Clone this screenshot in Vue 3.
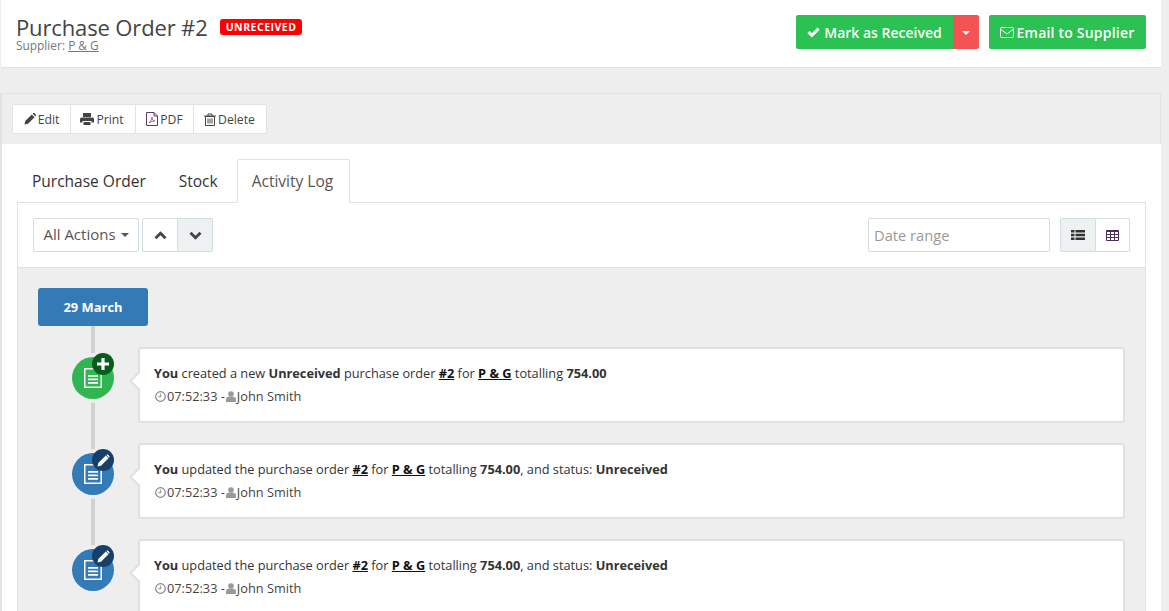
<script setup>
const rows = [
  { kind: 'add', parts: [['b','You'],['t',' created a new '],['b','Unreceived'],['t',' purchase order '],['l','#2'],['t',' for '],['l','P & G'],['t',' totalling '],['b','754.00']] },
  { kind: 'edit', parts: [['b','You'],['t',' updated the purchase order '],['l','#2'],['t',' for '],['l','P & G'],['t',' totalling '],['b','754.00'],['t',', and status: '],['b','Unreceived']] },
  { kind: 'edit', parts: [['b','You'],['t',' updated the purchase order '],['l','#2'],['t',' for '],['l','P & G'],['t',' totalling '],['b','754.00'],['t',', and status: '],['b','Unreceived']] }
]
</script>

<template>
  <div class="page">
    <header class="head">
      <div class="title-block">
        <div class="title-row">
          <h1>Purchase Order #2</h1>
          <span class="badge">UNRECEIVED</span>
        </div>
        <div class="supplier">Supplier: <a>P &amp; G</a></div>
      </div>
      <div class="head-actions">
        <div class="split">
          <button class="btn-green main">
            <svg width="13" height="11" viewBox="0 0 13 11"><path d="M1.400 5.200 4.800 8.400 11.600 1.600" fill="none" stroke="#fff" stroke-width="3"/></svg>
            Mark as Received
          </button>
          <button class="btn-red"><span class="caret white"></span></button>
        </div>
        <button class="btn-green mail">
          <svg width="14" height="11" viewBox="0 0 14 11"><rect x=".5" y=".5" width="13" height="10" rx="1" fill="none" stroke="#fff"/><path d="M1 2.500 7 7l6-4.500" fill="none" stroke="#fff"/></svg><span>Email to Supplier</span>
        </button>
      </div>
    </header>

    <section class="work">
      <div class="toolbar">
        <button class="tool t-edit">
          <svg width="12" height="12" viewBox="0 0 12 12"><path d="M0.500 11.500 1.200 8 7.800 1.400 10.600 4.200 4 10.800ZM8.600.600 9.200 0a.9.900 0 0 1 1.200 0l1.400 1.400a.9.900 0 0 1 0 1.200L11.300 3.400Z" fill="#444"/></svg>Edit
        </button>
        <button class="tool t-print">
          <svg width="14" height="12" viewBox="0 0 14 12"><path d="M3 0h8v4H3zM1.500 4.500h11A1.500 1.500 0 0 1 14 6v3.500h-2.500V8h-9v1.500H0V6a1.500 1.500 0 0 1 1.500-1.500ZM3.500 9h7v3h-7z" fill="#444"/></svg>Print
        </button>
        <button class="tool t-pdf">
          <svg width="12" height="14" viewBox="0 0 12 14"><path d="M.5.500h7.500l3.500 3.500v9.500H.5Z M8 .5V4h3.500" fill="none" stroke="#5b3a6b"/><path d="M3 11c1.500-1 3-4 3-6 0 3 1.500 3.500 3 4-2 0-4 .5-6 2Z" fill="none" stroke="#a25" stroke-width=".7"/></svg>PDF
        </button>
        <button class="tool t-del">
          <svg width="12" height="13" viewBox="0 0 12 13"><path d="M1.500 3.500h9v9h-9ZM0 3h12M4 3V1h4v2M4 5.500v5M6 5.500v5M8 5.500v5" fill="none" stroke="#444"/></svg>Delete
        </button>
      </div>

      <div class="panel">
        <nav class="tabs">
          <a class="tab">Purchase Order</a>
          <a class="tab">Stock</a>
          <a class="tab active">Activity Log</a>
        </nav>
        <div class="tab-body">
          <div class="filters">
            <div class="f-left">
              <button class="fbtn actions">All Actions <span class="caret"></span></button>
              <div class="group">
                <button class="fbtn arrow">
                  <svg width="13" height="9" viewBox="0 0 13 9"><path d="M1.500 7.300 6.500 2.300l5 5" fill="none" stroke="#444" stroke-width="2.800"/></svg>
                </button>
                <button class="fbtn arrow on">
                  <svg width="13" height="9" viewBox="0 0 13 9"><path d="M1.500 1.700 6.500 6.700l5-5" fill="none" stroke="#444" stroke-width="2.800"/></svg>
                </button>
              </div>
            </div>
            <div class="f-right">
              <input class="date" placeholder="Date range" />
              <div class="group">
                <button class="fbtn view on">
                  <svg width="14" height="12" viewBox="0 0 14 12"><path d="M0 1h3.500v2.600H0zM4.500 1H14v2.600H4.500zM0 4.700h3.500v2.600H0zM4.500 4.700H14v2.600H4.500zM0 8.400h3.500V11H0zM4.500 8.400H14V11H4.500z" fill="#333"/></svg>
                </button>
                <button class="fbtn view">
                  <svg width="13" height="11" viewBox="0 0 13 11"><path d="M.5.500h12v10H.5ZM.5 1.500h12M.5 4.500h12M.5 7.500h12M4.500 1.500v9M8.500 1.500v9" fill="none" stroke="#4b2f55"/></svg>
                </button>
              </div>
            </div>
          </div>

          <div class="timeline">
            <div class="date-tag">29 March</div>
            <div v-for="(r, i) in rows" :key="i" class="entry">
              <div class="node" :class="r.kind">
                <svg class="doc" width="18" height="20" viewBox="0 0 18 20"><path d="M.750.750h12l4.500 4.500v14H.750Z" fill="none" stroke="#fff" stroke-width="1.500"/><path d="M4 7h10v1.700H4zM4 10.500h10v1.700H4zM4 14h10v1.700H4z" fill="#fff"/></svg>
                <span class="mini">
                  <svg v-if="r.kind === 'add'" width="12" height="12" viewBox="0 0 12 12"><path d="M4.400 0h3.200v4.400H12v3.200H7.600V12H4.400V7.600H0V4.400h4.400Z" fill="#fff"/></svg>
                  <svg v-else width="13" height="13" viewBox="0 0 13 13"><path d="M.5 12.500 1.300 9 8.800 1.500 11.500 4.200 4 11.700Z" fill="#fff"/><path d="M9.700.7a1 1 0 0 1 1.400 0l1.200 1.200a1 1 0 0 1 0 1.400l-.4.400-2.600-2.600Z" fill="#fff"/></svg>
                </span>
              </div>
              <div class="card">
                <p class="msg">
                  <template v-for="(p, j) in r.parts" :key="j"><b v-if="p[0] === 'b'">{{ p[1] }}</b><a v-else-if="p[0] === 'l'">{{ p[1] }}</a><template v-else>{{ p[1] }}</template></template>
                </p>
                <p class="meta">
                  <svg class="clock" width="11" height="11" viewBox="0 0 11 11"><circle cx="5.500" cy="5.500" r="4.800" fill="none" stroke="#888" stroke-width="1.200"/><path d="M5.700 2.600v3.200H3.300" fill="none" stroke="#888"/></svg><span>07:52:33 -</span><svg class="user" width="10" height="11" viewBox="0 0 10 11"><circle cx="5" cy="3" r="2.800" fill="#999"/><path d="M0 11V8.200C0 6.800 1.200 6 3 5.600h4C8.800 6 10 6.800 10 8.200V11Z" fill="#999"/></svg><span>John Smith</span>
                </p>
              </div>
            </div>
          </div>
        </div>
      </div>
    </section>
  </div>
</template>

<style>
html, body { margin: 0; background: #fff; overflow: hidden; }
</style>

<style scoped>
.page {
  width: 1169px; height: 611px; overflow: hidden; background: #eee;
  font-family: "Open Sans", sans-serif; color: #333; box-sizing: border-box;
}
button { font-family: inherit; cursor: pointer; }
.head {
  height: 68px; box-sizing: border-box; margin: 0 8px 0 1px; background: #fff;
  border-bottom: 1px solid #e3e3e3; display: flex; justify-content: space-between;
  padding: 15px 15px 0 15px;
}
.title-row { display: flex; align-items: center; gap: 12px; height: 24px; }
h1 { margin: 0; font-size: 22px; font-weight: 400; color: #444; line-height: 24px; letter-spacing: -.135px; }
.badge {
  background: #f00; color: #fff; font-size: 10.500px; font-weight: 700; line-height: 17px;
  height: 16px; padding: 0 6px; border-radius: 3px; letter-spacing: .5px; margin-top: -1px;
}
.supplier { font-size: 11.900px; line-height: 12px; color: #777; }
.supplier a { text-decoration: underline; }
.head-actions { display: flex; gap: 10px; }
.split { display: flex; }
.btn-green, .btn-red {
  height: 34px; border: 0; color: #fff; font-size: 14px; font-weight: 600;
  display: flex; align-items: center; padding: 0;
}
.btn-green { background: #2bc253; border-radius: 2px; white-space: nowrap; }
.main { width: 157px; justify-content: center; gap: 4px; border-radius: 2px 0 0 2px; }
.mail { width: 157px; justify-content: center; gap: 3px; padding-right: 1px; }
.mail span { letter-spacing: .2px; }
.btn-red { width: 26px; background: #f45353; justify-content: center; border-radius: 0 2px 2px 0; }
.caret {
  display: inline-block; width: 0; height: 0; vertical-align: middle; margin-left: 1px;
  border-top: 4px solid #555; border-left: 4px solid transparent; border-right: 4px solid transparent;
}
.caret.white { border-top-color: #fff; margin: 2px 0 0; }
.work { margin-top: 25px; margin-right: 8px; border-top: 1px solid #e3e3e3; border-left: 2px solid #e3e3e3; border-right: 1px solid #e3e3e3; padding-top: 10px; }
.toolbar { display: flex; margin-left: 10px; height: 30px; box-sizing: border-box; width: fit-content; background: #fff; border: 1px solid #dfe3e6; border-radius: 2px; }
.tool {
  background: #fff; border: 0; border-right: 1px solid #dfe3e6; padding: 0; height: 28px; box-sizing: border-box;
  font-size: 12.200px; color: #444; display: flex; align-items: center; justify-content: center; gap: 2px; font-weight: 400;
}
.t-edit { width: 58px; }
.t-print { width: 65px; padding-right: 2px; }
.t-pdf { width: 58px; }
.t-del { width: 72px; border-right: 0; padding-right: 1px; }
.panel { background: #fff; margin-top: 10px; margin-right: -1px; padding: 15px 15px 0 15px; height: 480px; box-sizing: border-box; }
.tabs { display: flex; height: 44px; box-sizing: border-box; position: relative; }
.tab { height: 44px; line-height: 42px; font-size: 15.500px; color: #333; box-sizing: border-box; border: 1px solid transparent; white-space: nowrap; }
.tab:nth-child(1) { padding: 0 16px 0 14px; }
.tab:nth-child(2) { padding: 0 18px 0 15px; }
.tab.active { padding: 0 16px 0 14px; color: #555; background: #fff; border-color: #dfe3e6 #dfe3e6 #fff; border-radius: 2px 2px 0 0; position: relative; z-index: 1; }
.tab-body { border: 1px solid #dfe3e6; margin-top: -1px; }
.filters { height: 65px; box-sizing: border-box; padding: 15px 15px 0 15px; display: flex; justify-content: space-between; background: #fff; border-bottom: 1px solid #dfe3e6; }
.f-left, .f-right { display: flex; gap: 3px; height: 34px; }
.f-right { gap: 10px; }
.group { display: flex; }
.fbtn { background: #fff; border: 1px solid #d3dce0; height: 34px; box-sizing: border-box; padding: 0; display: flex; align-items: center; justify-content: center; color: #555; }
.actions { width: 106px; font-size: 15px; border-radius: 2px; gap: 4px; padding: 0 0 2px 0; }
.actions .caret { margin-top: 2px; }
.arrow { width: 36px; border-radius: 2px 0 0 2px; }
.arrow + .arrow { border-left: 0; width: 35px; border-radius: 0 2px 2px 0; }
.view { width: 36px; border-radius: 2px 0 0 2px; }
.view + .view { border-left: 0; width: 34px; border-radius: 0 2px 2px 0; }
.on { background: #edf1f2; }
.date { width: 182px; height: 34px; box-sizing: border-box; border: 1px solid #d3dce0; border-radius: 2px; padding: 0 5px; font: 14.700px "Open Sans", sans-serif; outline: 0; }
.date::placeholder { color: #999; opacity: 1; }
.timeline { background: #eee; padding: 20px 20px 0 20px; height: 400px; position: relative; }
.timeline::before { content: ""; position: absolute; left: 73px; top: 40px; height: 262px; width: 4px; background: #d2d0d0; }
.date-tag { position: relative; width: 110px; height: 38px; background: #337ab7; color: #fff; font-size: 12.900px; font-weight: 700; text-align: center; line-height: 38px; border-radius: 3px; margin-bottom: 21px; }
.entry { display: flex; position: relative; height: 76px; margin-bottom: 20px; padding-left: 34px; }
.node { position: relative; width: 42px; height: 42px; border-radius: 50%; margin-top: 10px; display: flex; align-items: center; justify-content: center; box-shadow: 0 0 0 4px #eee; flex: none; }
.node.add { background: #2fb551; }
.node.edit { background: #337ab7; }
.mini { position: absolute; right: 0; top: -4px; width: 22px; height: 22px; border-radius: 50%; display: flex; align-items: center; justify-content: center; }
.add .mini { background: #0a5c1d; }
.edit .mini { background: #173f69; }
.card { position: relative; margin-left: 24px; flex: 1; background: #fff; border: 2px solid #e0e0e0; border-radius: 3px; box-sizing: border-box; padding: 0 14px; height: 76px; }
.card::before { content: ""; position: absolute; left: -11px; top: 23px; width: 0; height: 0; border-top: 9px solid transparent; border-bottom: 9px solid transparent; border-right: 9px solid #e0e0e0; }
.card::after { content: ""; position: absolute; left: -8px; top: 24px; width: 0; height: 0; border-top: 8px solid transparent; border-bottom: 8px solid transparent; border-right: 8px solid #fff; }
.msg { margin: 14px 0 0; font-size: 12.750px; line-height: 20px; color: #333; white-space: nowrap; }
.msg b { font-weight: 700; }
.msg a { font-weight: 700; color: #111; text-decoration: underline; }
.meta { margin: 3px 0 0; font-size: 12.750px; line-height: 20px; color: #444; display: flex; align-items: center; gap: 1px; white-space: nowrap; }
.clock { margin-left: 1px; }
.user { margin-left: 0; }
</style>
